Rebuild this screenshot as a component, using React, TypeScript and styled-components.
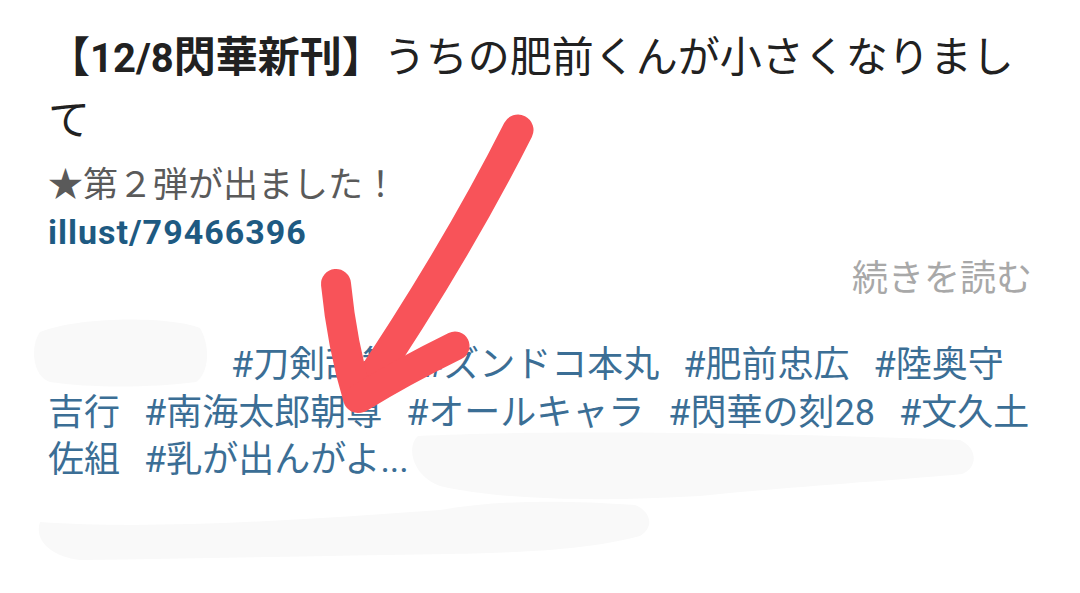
import React from "react";
import styled, { createGlobalStyle } from "styled-components";

const GlobalStyle = createGlobalStyle`
  html, body {
    margin: 0;
    padding: 0;
    background: #ffffff;
  }
  body {
    font-family: Roboto, "Noto Sans CJK JP", "Noto Sans", sans-serif;
  }
`;

const Page = styled.div`
  position: relative;
  width: 1080px;
  height: 593px;
  overflow: hidden;
  background: #ffffff;
`;

const Content = styled.article`
  display: flex;
  flex-direction: column;
  padding: 26px 48px 0 48px;
`;

const Title = styled.h1`
  margin: 0;
  font-size: 42px;
  font-weight: 400;
  line-height: 63px;
  color: #212121;
`;

const Strong = styled.span`
  font-weight: 700;
`;

const Latin = styled.span<{ $size: number }>`
  font-size: ${(p) => p.$size}px;
  line-height: 1;
`;

const Description = styled.p`
  margin: 10px 0 0;
  font-size: 35px;
  line-height: 47px;
  color: #5a5a5a;
`;

const IllustLink = styled.a`
  align-self: flex-start;
  font-size: 34px;
  font-weight: 700;
  line-height: 47px;
  letter-spacing: 1px;
  color: #1e5a82;
  text-decoration: none;
`;

const ReadMore = styled.div`
  align-self: flex-end;
  font-size: 36px;
  line-height: 47px;
  color: #a8a8a8;
`;

const Tags = styled.p`
  margin: 39px -6px 0 0;
  font-size: 36px;
  line-height: 47.5px;
  color: #3b6e95;
`;

const Tag = styled.span`
  margin-right: 24px;
`;

const HiddenTag = styled.span`
  display: inline-block;
  width: 159px;
  margin-right: 24px;
`;

const Overlay = styled.svg`
  position: absolute;
  inset: 0;
  pointer-events: none;
`;

const tags: React.ReactNode[] = [
  "#刀剣乱舞",
  "#ズンドコ本丸",
  "#肥前忠広",
  "#陸奥守吉行",
  "#南海太郎朝尊",
  "#オールキャラ",
  <>
    #閃華の刻<Latin $size={36}>28</Latin>
  </>,
  "#文久土佐組",
];

export default function App() {
  return (
    <Page>
      <GlobalStyle />
      <Content>
        <Title>
          <Strong>
            【<Latin $size={40}>12/8</Latin>閃華新刊】
          </Strong>
          うちの肥前くんが小さくなりまして
        </Title>
        <Description>★第２弾が出ました！</Description>
        <IllustLink href="#">illust/79466396</IllustLink>
        <ReadMore>続きを読む</ReadMore>
        <Tags>
          <HiddenTag />
          {tags.map((t, i) => (
            <Tag key={i}>{t}</Tag>
          ))}
          <span>#乳が出んがよ...</span>
        </Tags>
      </Content>
      <Overlay width="1080" height="593" viewBox="0 0 1080 593">
        <g fill="#f9f9f9">
          <path d="M40 332 C 80 316, 170 316, 200 328 C 210 345, 210 372, 196 382 C 150 388, 90 388, 50 382 C 32 376, 30 346, 40 332 Z" />
          <path d="M418 436 C 530 430, 760 432, 960 440 C 978 448, 978 468, 962 474 C 900 480, 800 486, 700 496 C 600 502, 500 500, 440 486 C 412 476, 406 446, 418 436 Z" />
          <path d="M40 522 C 150 530, 300 520, 440 510 C 500 500, 560 500, 635 505 C 652 512, 654 528, 640 536 C 600 546, 560 552, 450 554 C 330 556, 200 558, 80 560 C 50 556, 34 540, 40 522 Z" />
        </g>
        <g
          fill="none"
          stroke="#f85359"
          strokeLinecap="round"
          strokeLinejoin="round"
        >
          <path d="M518 130 Q 455 255 360 396" strokeWidth="31" />
          <path d="M336 284 Q 342 345 358 398" strokeWidth="30" />
          <path d="M455 346 Q 402 372 360 398" strokeWidth="29" />
        </g>
      </Overlay>
    </Page>
  );
}
